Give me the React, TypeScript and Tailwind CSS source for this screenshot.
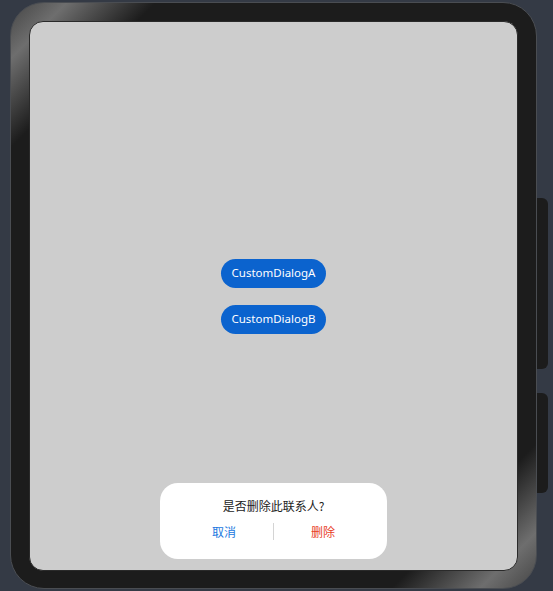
export default function App() {
  return (
    <div className="w-[553px] h-[591px] bg-[#343a45] pl-[10px] pt-[2px] overflow-hidden">
      <div className="relative w-[527px] h-[587px] rounded-[34px] border border-[#4a4d52] bg-[linear-gradient(135deg,#454545_0%,#6e6e6e_5%,#1c1c1c_13%,#1c1c1c_87%,#6e6e6e_95%,#454545_100%)] pt-[18px] pl-[18px] pr-[17px] pb-[17px]">
        {/* side keys */}
        <div className="absolute left-[526px] top-[195px] w-[11px] h-[171px] rounded-r-[6px] bg-[#1c1c1c]" />
        <div className="absolute left-[526px] top-[390px] w-[11px] h-[100px] rounded-r-[6px] bg-[#1c1c1c]" />

        {/* screen */}
        <div className="relative w-[489px] h-[550px] rounded-[14px] bg-[#cdcdcd] border border-[#2a2a2a] flex flex-col items-center justify-center gap-[17px]">
          {["CustomDialogA", "CustomDialogB"].map((label) => (
            <button
              key={label}
              className="w-[105px] h-[29px] rounded-full bg-[#0b63ce] text-white text-[11.5px] leading-none"
              style={{ fontFamily: "'Noto Sans', 'Noto Sans CJK SC', sans-serif" }}
            >
              {label}
            </button>
          ))}

          {/* dialog */}
          <div
            className="absolute bottom-[11px] left-[130px] w-[227px] h-[76px] rounded-[18px] bg-white flex flex-col items-center px-[15px]"
            style={{ fontFamily: "'Noto Sans CJK SC', 'Noto Sans', sans-serif" }}
          >
            <div className="mt-[15px] text-[12px] leading-[16px] text-[#222222]">是否删除此联系人?</div>
            <div className="mt-[9px] w-full flex items-center">
              <div className="flex-1 text-center text-[12px] leading-[16px] text-[#1a78e0]">取消</div>
              <div className="w-px h-[17px] bg-[#d4d4d4]" />
              <div className="flex-1 text-center text-[12px] leading-[16px] text-[#e84026]">删除</div>
            </div>
          </div>
        </div>
      </div>
    </div>
  );
}
